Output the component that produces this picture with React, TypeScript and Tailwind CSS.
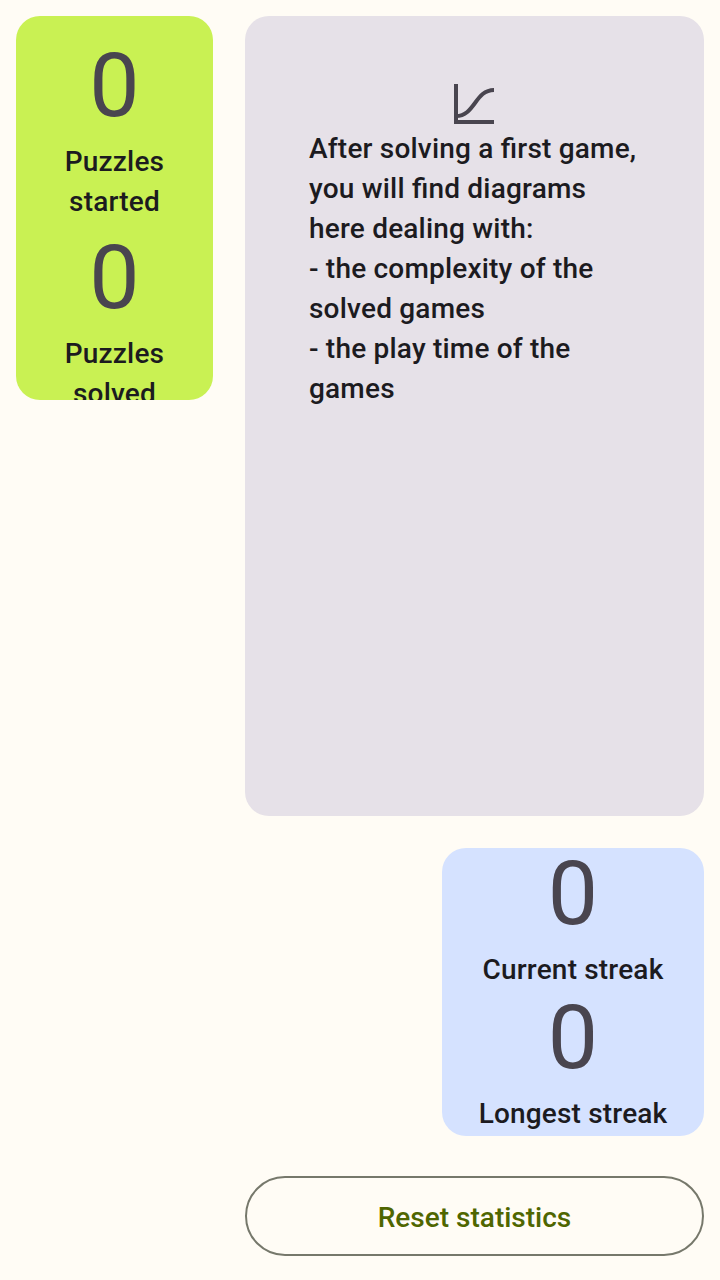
function Stat({ value, label, className = "" }: { value: number; label: string; className?: string }) {
  return (
    <div className={`flex flex-col items-center text-center ${className}`}>
      <span className="h-[126px] pt-[7px] text-[89.5px] leading-[126px] text-[#49454f]">{value}</span>
      <span className="text-[28px] font-medium leading-[40px] tracking-[0.18px]">{label}</span>
    </div>
  );
}

export default function App() {
  return (
    <main className="flex h-[1280px] w-[720px] gap-8 bg-[#fffcf5] p-4 font-['Roboto',sans-serif] text-[#1c1b1f]">
      <section className="h-[384px] w-[197px] shrink-0 overflow-hidden rounded-3xl bg-[#c9f153] px-8">
        <Stat value={0} label="Puzzles started" className="h-[192px]" />
        <Stat value={0} label="Puzzles solved" className="h-[192px]" />
      </section>
      <div className="flex w-[459px] flex-col">
        <section className="flex h-[800px] flex-col items-center rounded-3xl bg-[#e6e1e8] p-16">
          <svg width="48" height="48" viewBox="0 0 24 24" className="mr-px shrink-0" fill="none" stroke="#49454f" strokeWidth="2">
            <path d="M3 2v19h19" />
            <path d="M3 18c9.5 0 9.5-13 19-13" />
          </svg>
          <p className="w-full whitespace-pre-line pt-px text-[28px] font-medium leading-[40px] tracking-[0.2px] [font-feature-settings:'liga'_1]">
            {"After solving a first game, you will find diagrams here dealing with:\n- the complexity of the solved games\n- the play time of the games"}
          </p>
        </section>
        <section className="mt-8 h-[288px] w-[262px] self-end overflow-hidden rounded-3xl bg-[#d5e2ff]">
          <Stat value={0} label="Current streak" className="-mt-[24px] h-[144px]" />
          <Stat value={0} label="Longest streak" />
        </section>
        <button className="mt-10 h-20 rounded-full border-2 border-[#76786b] pt-[3px] text-[28px] font-medium leading-[40px] text-[#4f6600]">
          Reset statistics
        </button>
      </div>
    </main>
  );
}
